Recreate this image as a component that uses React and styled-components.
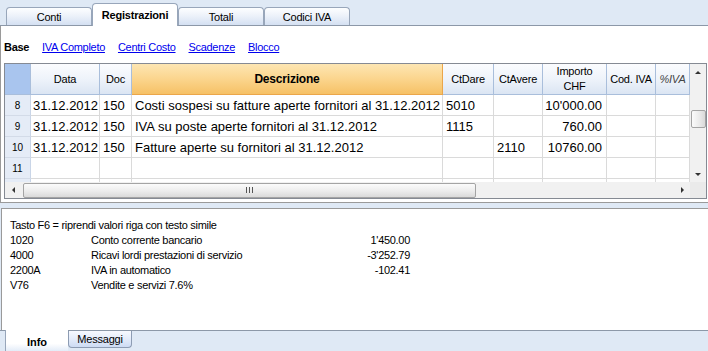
import React from 'react';
import styled, { createGlobalStyle } from 'styled-components';

const Global = createGlobalStyle`
  html, body { margin: 0; padding: 0; background: #dfe9f5; }
  body { font-family: "Liberation Sans", Arial, sans-serif; }
`;

const Window = styled.div`
  width: 708px;
  height: 351px;
  display: flex;
  flex-direction: column;
  background: #dfe9f5;
  overflow: hidden;
  font-family: "Liberation Sans", Arial, sans-serif;
  color: #000;
`;

const TabStrip = styled.div`
  height: 25px;
  border-bottom: 1px solid #8c98a8;
  display: flex;
  align-items: flex-end;
  padding-left: 6px;
  flex: none;
`;

const TopTab = styled.div`
  box-sizing: border-box;
  width: 86px;
  height: ${(p) => (p.$active ? 23 : 18)}px;
  margin-bottom: ${(p) => (p.$active ? -1 : 0)}px;
  border: 1px solid #98a6ba;
  border-bottom: none;
  border-radius: 4px 4px 0 0;
  background: ${(p) => (p.$active ? '#ffffff' : 'linear-gradient(#fdfeff, #edf2fa 45%, #d4e0f2)')};
  font-size: 11px;
  font-weight: ${(p) => (p.$active ? 700 : 400)};
  letter-spacing: -0.2px;
  display: flex;
  align-items: center;
  justify-content: center;
  padding-top: ${(p) => (p.$active ? 0 : 1)}px;
`;

const MainPanel = styled.div`
  box-sizing: border-box;
  height: 177px;
  flex: none;
  background: #fff;
  border-left: 1px solid #9a9a9a;
  border-bottom: 1px solid #9a9a9a;
  padding: 0 1px 0 3px;
  margin-bottom: 5px;
  display: flex;
  flex-direction: column;
`;

const SubTabs = styled.div`
  height: 37px;
  box-sizing: border-box;
  padding-top: 5px;
  display: flex;
  align-items: center;
  gap: 13px;
  font-size: 11px;
  flex: none;
`;

const SubTab = styled.span`
  color: ${(p) => (p.$active ? '#000' : '#0000ee')};
  font-weight: ${(p) => (p.$active ? 700 : 400)};
  text-decoration: ${(p) => (p.$active ? 'none' : 'underline')};
  letter-spacing: -0.3px;
`;

const TableFrame = styled.div`
  box-sizing: border-box;
  height: 136px;
  border: 1px solid #858a93;
  display: flex;
  flex-direction: column;
`;

const TableBody = styled.div`
  display: flex;
  height: 118px;
  flex: none;
`;

const Viewport = styled.div`
  width: 685px;
  height: 118px;
  overflow: hidden;
`;

const GridRow = styled.div`
  display: grid;
  grid-template-columns: 26px 69px 32px 311px 51px 49px 64px 49px 34px;
  height: ${(p) => p.$h}px;
`;

const HeadCell = styled.div`
  box-sizing: border-box;
  border-right: 1px solid ${(p) => (p.$kind === 'sort' ? '#eba64a' : '#a9bedb')};
  border-bottom: 1px solid ${(p) => (p.$kind === 'sort' ? '#eba64a' : '#a9bedb')};
  background: ${(p) =>
    p.$kind === 'corner'
      ? '#a9c5ee'
      : p.$kind === 'sort'
      ? 'linear-gradient(#fde6b3, #fbd58d 50%, #f6c166)'
      : 'linear-gradient(#fbfcfe, #eef3fa 50%, #dbe5f3)'};
  display: flex;
  align-items: center;
  justify-content: center;
  text-align: center;
  font-size: ${(p) => (p.$kind === 'sort' ? 12 : 11)}px;
  font-weight: ${(p) => (p.$kind === 'sort' ? 700 : 400)};
  font-style: ${(p) => (p.$italic ? 'italic' : 'normal')};
  color: ${(p) => (p.$italic ? '#444' : '#000')};
  line-height: 15px;
  letter-spacing: -0.2px;
  white-space: pre-line;
`;

const RowNum = styled.div`
  box-sizing: border-box;
  background: #e5ecf7;
  border-right: 1px solid #c9d5e7;
  border-bottom: 1px solid #d3dbe8;
  display: flex;
  align-items: center;
  justify-content: center;
  font-size: 10px;
`;

const Cell = styled.div`
  box-sizing: border-box;
  border-right: 1px solid #dadada;
  border-bottom: 1px solid #dadada;
  display: flex;
  align-items: center;
  justify-content: ${(p) => (p.$right ? 'flex-end' : 'flex-start')};
  padding: 0 ${(p) => (p.$right ? 4 : 0)}px 0 ${(p) => p.$pl ?? 3}px;
  font-size: 13px;
  white-space: nowrap;
  overflow: hidden;
`;

const VScroll = styled.div`
  width: 16px;
  height: 118px;
  background: #f1f1f1;
  display: flex;
  flex-direction: column;
`;

const ScrollBtn = styled.div`
  width: 16px;
  height: 16px;
  flex: none;
  display: flex;
  align-items: center;
  justify-content: center;
`;

const Arrow = styled.span`
  width: 0;
  height: 0;
  border-style: solid;
  border-color: transparent;
  ${(p) =>
    p.$dir === 'up'
      ? 'border-width: 0 3px 3px 3px; border-bottom-color: #333;'
      : p.$dir === 'down'
      ? 'border-width: 3px 3px 0 3px; border-top-color: #333;'
      : p.$dir === 'left'
      ? 'border-width: 3px 3px 3px 0; border-right-color: #333;'
      : 'border-width: 3px 0 3px 3px; border-left-color: #333;'}
`;

const VTrack = styled.div`
  flex: 1;
  display: flex;
  flex-direction: column;
  align-items: center;
`;

const VThumb = styled.div`
  box-sizing: border-box;
  margin-top: 30px;
  width: 15px;
  height: 18px;
  border: 1px solid #a4a4a4;
  border-radius: 2px;
  background: linear-gradient(90deg, #fbfbfb, #e9e9e9 60%, #d9d9d9);
`;

const HBar = styled.div`
  display: flex;
  height: 16px;
  flex: none;
`;

const HScroll = styled.div`
  width: 685px;
  height: 16px;
  background: #f1f1f1;
  display: flex;
  align-items: center;
`;

const HTrack = styled.div`
  flex: 1;
  height: 16px;
  display: flex;
  align-items: center;
  padding-left: 2px;
`;

const HThumb = styled.div`
  box-sizing: border-box;
  width: 453px;
  height: 15px;
  border: 1px solid #a4a4a4;
  border-radius: 2px;
  background: linear-gradient(#fbfbfb, #ececec 55%, #dadada);
  display: flex;
  align-items: center;
  justify-content: center;
  gap: 2px;
`;

const GripLine = styled.span`
  width: 1px;
  height: 6px;
  background: #555;
`;

const Corner = styled.div`
  width: 16px;
  height: 16px;
  background: #eaeaea;
`;

const InfoPanel = styled.div`
  box-sizing: border-box;
  height: 122px;
  flex: none;
  margin-left: 1px;
  background: #fff;
  border-top: 1px solid #9a9a9a;
  border-left: 1px solid #9a9a9a;
  padding: 9px 0 0 8px;
  display: grid;
  grid-template-columns: 81px 200px 119px;
  grid-auto-rows: 15px;
  align-content: start;
  font-size: 11px;
  letter-spacing: -0.3px;
`;

const InfoLine = styled.div`
  grid-column: 1 / -1;
  line-height: 15px;
`;

const InfoCell = styled.div`
  line-height: 15px;
  text-align: ${(p) => (p.$right ? 'right' : 'left')};
  white-space: nowrap;
`;

const BottomTabs = styled.div`
  height: 21px;
  flex: none;
  border-top: 1px solid #8c98a8;
  display: flex;
  align-items: flex-start;
  padding-left: 5px;
`;

const InfoTab = styled.div`
  box-sizing: border-box;
  width: 63px;
  height: 21px;
  margin-top: -1px;
  border-left: 1px solid #98a6ba;
  background: linear-gradient(#ffffff, #ffffff 65%, #e3ecf8);
  font-size: 11px;
  font-weight: 700;
  display: flex;
  align-items: center;
  justify-content: center;
  padding-top: 2px;
`;

const MsgTab = styled.div`
  box-sizing: border-box;
  width: 64px;
  height: 17px;
  border: 1px solid #8d9cb3;
  border-top: none;
  border-radius: 0 0 4px 4px;
  background: linear-gradient(#f7f9fe, #e4ecfa 50%, #cddbf3);
  font-size: 11px;
  letter-spacing: -0.2px;
  display: flex;
  align-items: center;
  justify-content: center;
`;

const rows = [
  { n: '8', date: '31.12.2012', doc: '150', desc: 'Costi sospesi su fatture aperte fornitori al 31.12.2012', dare: '5010', avere: '', imp: "10'000.00" },
  { n: '9', date: '31.12.2012', doc: '150', desc: 'IVA su poste aperte fornitori al 31.12.2012', dare: '1115', avere: '', imp: '760.00' },
  { n: '10', date: '31.12.2012', doc: '150', desc: 'Fatture aperte su fornitori al 31.12.2012', dare: '', avere: '2110', imp: '10760.00' },
  { n: '11', date: '', doc: '', desc: '', dare: '', avere: '', imp: '' },
  { n: '', date: '', doc: '', desc: '', dare: '', avere: '', imp: '' },
];

const info = [
  ['1020', 'Conto corrente bancario', "1'450.00"],
  ['4000', 'Ricavi lordi prestazioni di servizio', "-3'252.79"],
  ['2200A', 'IVA in automatico', '-102.41'],
  ['V76', 'Vendite e servizi 7.6%', ''],
];

export default function App() {
  return (
    <Window>
      <Global />
      <TabStrip>
        <TopTab>Conti</TopTab>
        <TopTab $active>Registrazioni</TopTab>
        <TopTab>Totali</TopTab>
        <TopTab>Codici IVA</TopTab>
      </TabStrip>
      <MainPanel>
        <SubTabs>
          <SubTab $active>Base</SubTab>
          <SubTab>IVA Completo</SubTab>
          <SubTab>Centri Costo</SubTab>
          <SubTab>Scadenze</SubTab>
          <SubTab>Blocco</SubTab>
        </SubTabs>
        <TableFrame>
          <TableBody>
            <Viewport>
              <GridRow $h={31}>
                <HeadCell $kind="corner" />
                <HeadCell>Data</HeadCell>
                <HeadCell>Doc</HeadCell>
                <HeadCell $kind="sort">Descrizione</HeadCell>
                <HeadCell>CtDare</HeadCell>
                <HeadCell>CtAvere</HeadCell>
                <HeadCell>{'Importo\nCHF'}</HeadCell>
                <HeadCell>Cod. IVA</HeadCell>
                <HeadCell $italic>%IVA</HeadCell>
              </GridRow>
              {rows.map((r, i) => (
                <GridRow key={i} $h={21}>
                  <RowNum>{r.n}</RowNum>
                  <Cell $pl={2}>{r.date}</Cell>
                  <Cell>{r.doc}</Cell>
                  <Cell>{r.desc}</Cell>
                  <Cell>{r.dare}</Cell>
                  <Cell>{r.avere}</Cell>
                  <Cell $right>{r.imp}</Cell>
                  <Cell />
                  <Cell />
                </GridRow>
              ))}
            </Viewport>
            <VScroll>
              <ScrollBtn><Arrow $dir="up" /></ScrollBtn>
              <VTrack><VThumb /></VTrack>
              <ScrollBtn><Arrow $dir="down" /></ScrollBtn>
            </VScroll>
          </TableBody>
          <HBar>
            <HScroll>
              <ScrollBtn><Arrow $dir="left" /></ScrollBtn>
              <HTrack>
                <HThumb>
                  <GripLine />
                  <GripLine />
                  <GripLine />
                </HThumb>
              </HTrack>
              <ScrollBtn><Arrow $dir="right" /></ScrollBtn>
            </HScroll>
            <Corner />
          </HBar>
        </TableFrame>
      </MainPanel>
      <InfoPanel>
        <InfoLine>Tasto F6 = riprendi valori riga con testo simile</InfoLine>
        {info.map((r) => (
          <React.Fragment key={r[0]}>
            <InfoCell>{r[0]}</InfoCell>
            <InfoCell>{r[1]}</InfoCell>
            <InfoCell $right>{r[2]}</InfoCell>
          </React.Fragment>
        ))}
      </InfoPanel>
      <BottomTabs>
        <InfoTab>Info</InfoTab>
        <MsgTab>Messaggi</MsgTab>
      </BottomTabs>
    </Window>
  );
}
